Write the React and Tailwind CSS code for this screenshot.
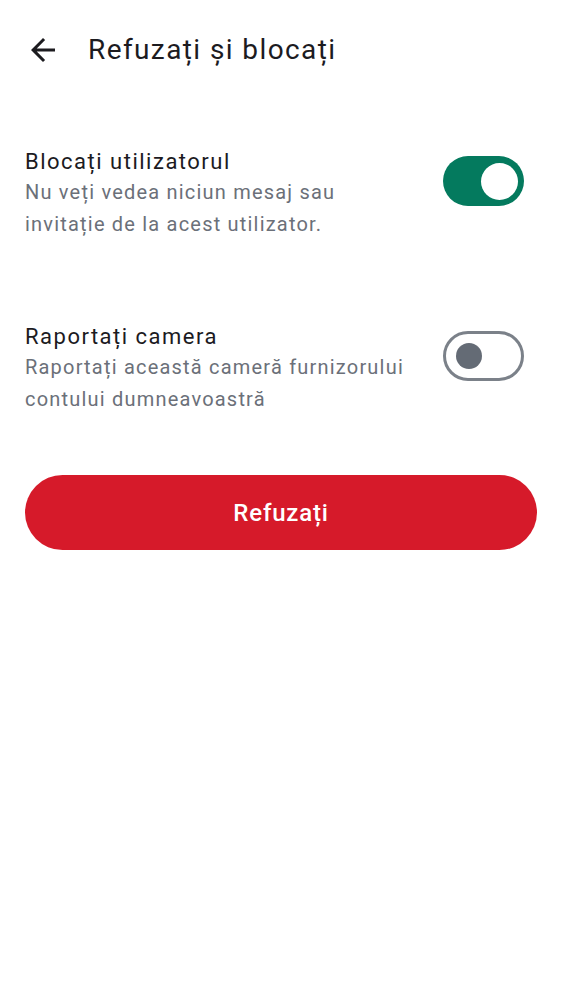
export default function App() {
  return (
    <div className="w-[562px] h-[1000px] bg-white" style={{ fontFamily: 'Roboto, "Noto Sans", sans-serif' }}>
      <div className="flex items-center h-[100px] pl-[25px]">
        <svg width="36" height="36" viewBox="0 0 24 24" className="text-[#1c1b1f]">
          <path d="M20 11H7.83l5.59-5.59L12 4l-8 8 8 8 1.41-1.41L7.83 13H20v-2z" fill="currentColor" />
        </svg>
        <h1 className="ml-[27px] text-[28px] leading-none text-[#1c1b1f] tracking-[1.4px]">Refuzați și blocați</h1>
      </div>
      <div className="px-[25px] pt-[46px]">
        <div className="flex items-start justify-between">
          <div>
            <div className="text-[22px] leading-[32px] text-[#1c1b1f] tracking-[1.5px]">Blocați utilizatorul</div>
            <div className="-mt-[2px] text-[20px] leading-[32px] text-[#6b7079] tracking-[1.2px] w-[386px]">Nu veți vedea niciun mesaj sau invitație de la acest utilizator.</div>
          </div>
          <div className="mt-[10px] mr-[13px] w-[81px] h-[50px] shrink-0 rounded-full bg-[#047a5e] flex items-center justify-end pr-[6px]">
            <div className="w-[37px] h-[37px] rounded-full bg-white" />
          </div>
        </div>
        <div className="flex items-start justify-between mt-[81px]">
          <div>
            <div className="text-[22px] leading-[32px] text-[#1c1b1f] tracking-[1.5px]">Raportați camera</div>
            <div className="-mt-[2px] text-[20px] leading-[32px] text-[#6b7079] tracking-[1.2px] w-[386px]">Raportați această cameră furnizorului contului dumneavoastră</div>
          </div>
          <div className="mt-[10px] mr-[13px] w-[81px] h-[50px] shrink-0 rounded-full border-[3px] border-[#7b8189] flex items-center pl-[10px]">
            <div className="w-[26px] h-[26px] rounded-full bg-[#646b75]" />
          </div>
        </div>
        <button className="mt-[60px] w-[512px] h-[75px] rounded-full bg-[#d61a2a] text-white text-[24px] tracking-[0.8px] font-medium flex items-center justify-center">Refuzați</button>
      </div>
    </div>
  );
}
